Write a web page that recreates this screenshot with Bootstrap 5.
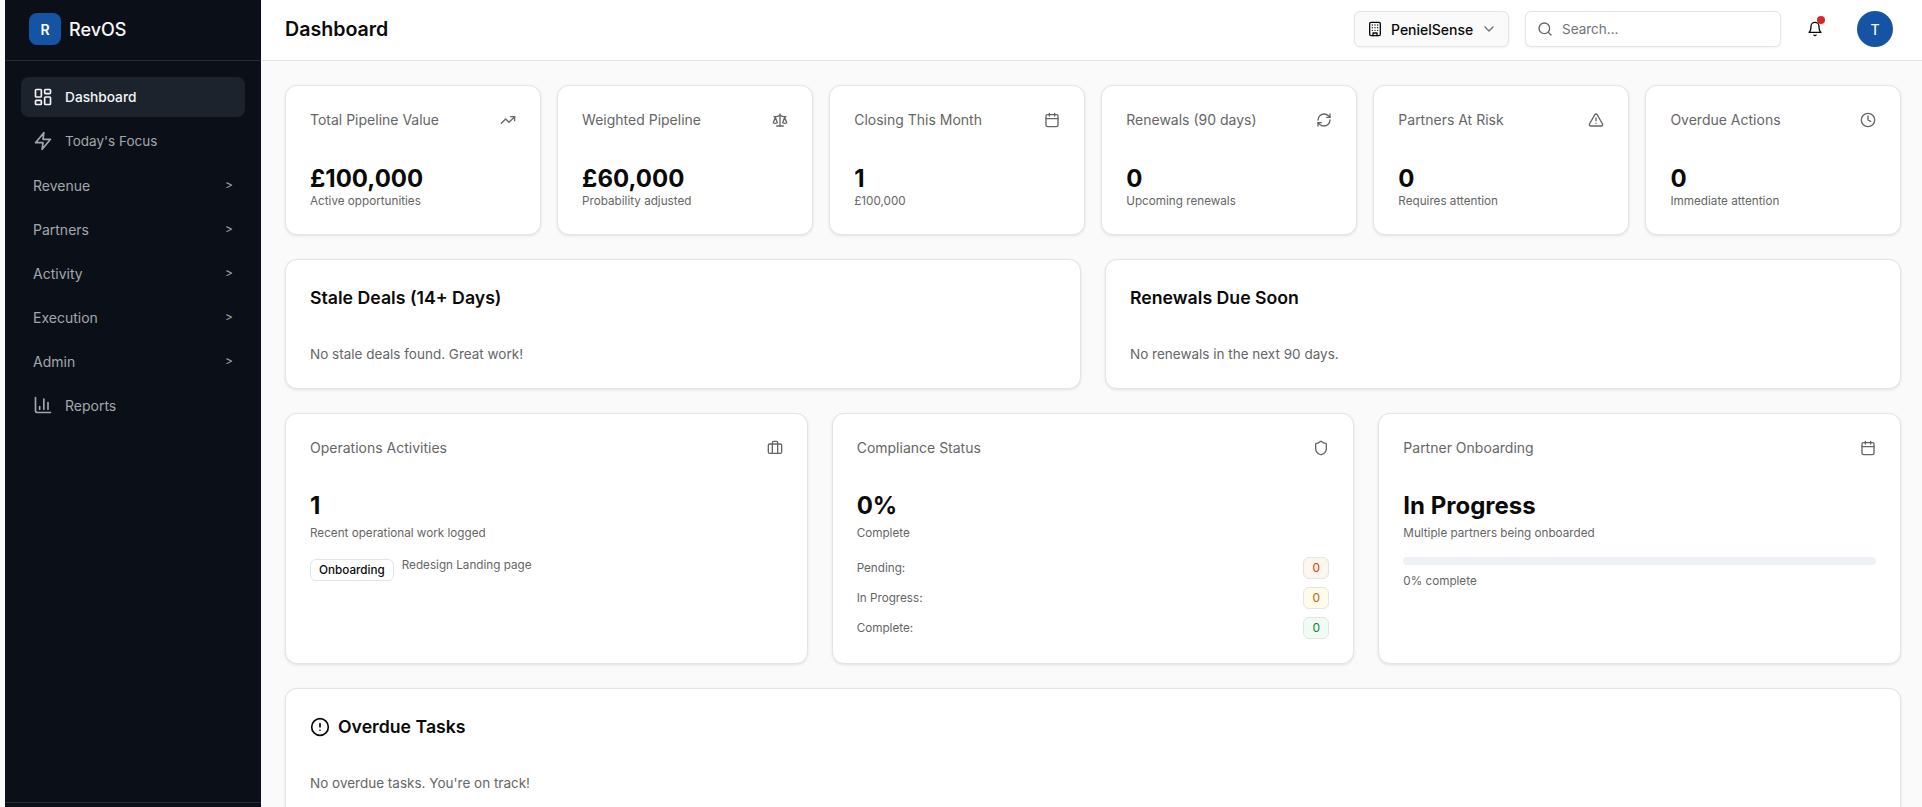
<!DOCTYPE html>
<html lang="en">
<head>
  <meta charset="UTF-8" />
  <meta name="viewport" content="width=device-width, initial-scale=1.0"/>
  <title>Dashboard - RevOS</title>
  <link href="https://cdn.jsdelivr.net/npm/bootstrap@5.3.0/dist/css/bootstrap.min.css" rel="stylesheet">
  <style>
    body {
      font-family: Inter, "Liberation Sans", sans-serif;
      background-color: #fafafa;
      color: #0a0a0a;
      height: 100vh;
      overflow: hidden;
    }
    .ico {
      width: 16px;
      height: 16px;
      fill: none;
      stroke: currentColor;
      stroke-width: 2;
      stroke-linecap: round;
      stroke-linejoin: round;
      flex-shrink: 0;
    }
    .ico-nav { width: 20px; height: 20px; }

    .side-bar {
      width: 256px;
      margin-left: 5px;
      background-color: #0b1018;
      flex-shrink: 0;
    }
    .side-brand {
      height: 61px;
      padding: 0 0 2px 24px;
      border-bottom: 1px solid #262b34;
      color: #f7f7f7;
      font-size: 18px;
      font-weight: 500;
    }
    .brand-box {
      width: 32px;
      height: 32px;
      border-radius: 8px;
      background-color: #1554a5;
      font-size: 14px;
      font-weight: 600;
    }
    .side-nav { padding: 16px 16px 0; gap: 4px; }
    .side-link {
      height: 40px;
      padding: 0 12px;
      border-radius: 8px;
      color: #a3a6ab;
      font-size: 14px;
      gap: 12px;
      text-decoration: none;
    }
    .side-link.active { background-color: #1d232d; color: #f4f4f5; font-weight: 500; font-size: 13.7px; }
    .side-tight { font-size: 13.5px; }
    .side-arrow { font-size: 12px; }
    .side-foot { height: 5px; border-top: 1px solid #262b34; }

    .top-bar {
      height: 61px;
      padding: 0 29px 2px 24px;
      background-color: #fff;
      border-bottom: 1px solid #e4e4e4;
      flex-shrink: 0;
    }
    .top-title { font-size: 19.6px; font-weight: 600; margin: 2px 0 0; }
    .org-btn {
      width: 155px;
      height: 36px;
      padding: 0 12px;
      gap: 8px;
      background-color: #fafafa;
      border: 1px solid #e4e4e4;
      border-radius: 6px;
      color: #0a0a0a;
      font-size: 14px;
      font-weight: 500;
      box-shadow: 0 1px 2px rgba(0,0,0,.05);
    }
    .search-box { width: 256px; height: 36px; color: #666; }
    .search-box .form-control {
      height: 36px;
      padding-left: 36px;
      font-size: 13.5px;
      border-color: #e4e4e4;
      box-shadow: 0 1px 2px rgba(0,0,0,.05);
    }
    .search-box .form-control::placeholder { color: #737373; }
    .search-box .ico { position: absolute; left: 12px; top: 10px; }
    .bell-btn { width: 36px; height: 36px; color: #0a0a0a; }
    .bell-dot {
      position: absolute;
      top: 5px;
      right: 8px;
      width: 8px;
      height: 8px;
      border-radius: 50%;
      background-color: #dc2626;
    }
    .user-dot {
      width: 36px;
      height: 36px;
      background-color: #1554a5;
      color: #f4f4f5;
      font-size: 14px;
      font-weight: 500;
    }

    .main-area { padding: 24px 21px 0 24px; gap: 24px; overflow: hidden; }
    .panel {
      background-color: #fff;
      border: 1px solid #e4e4e4;
      border-radius: 12px;
      box-shadow: 0 1px 3px rgba(0,0,0,.1);
      padding: 24px;
    }
    .stat-grid { display: grid; grid-template-columns: repeat(6, 1fr); gap: 16.5px; }
    .duo-grid { display: grid; grid-template-columns: repeat(2, 1fr); gap: 24px; }
    .trio-grid { display: grid; grid-template-columns: repeat(3, 1fr); gap: 24px; }
    .stat-panel { height: 150px; }
    .tall-panel { height: 251px; }
    .wide-panel { height: 130px; }
    .panel-label { font-size: 14px; color: #666; line-height: 20px; }
    .panel-head { color: #666; margin-bottom: 33px; }
    .tall-panel .panel-head { margin-bottom: 32px; }
    .panel-value { font-size: 24px; font-weight: 700; line-height: 31px; }
    .panel-sub { font-size: 11.7px; color: #666; line-height: 16px; }
    .stat-panel .panel-sub { margin-top: -1px; }
    .tall-panel .panel-sub { margin-top: 4px; }
    .tall-panel .tag-note { margin-top: -2px; }
    .panel-title { font-size: 17.7px; font-weight: 600; line-height: 28px; margin: 0 0 32px; }
    .panel-text { font-size: 13.5px; color: #666; line-height: 20px; margin: 0; }
    .tag-row { margin-top: 18px; gap: 8px; }
    .tag-chip {
      color: #0a0a0a;
      background: #fff;
      border: 1px solid #e4e4e4;
      border-radius: 6px;
      font-size: 11.7px;
      font-weight: 500;
      padding: 0 8px;
      line-height: 20px;
    }
    .status-list { margin-top: 16px; gap: 8px; }
    .status-chip {
      width: 26px;
      height: 22px;
      border: 1px solid #e4e4e4;
      border-radius: 6px;
      font-size: 12px;
      font-weight: 400;
    }
    .chip-red { background-color: #fdf6ef; color: #dc3a0a; }
    .chip-amber { background-color: #fefbea; color: #b86a06; }
    .chip-green { background-color: #effbf3; color: #15803d; }
    .bar-track { height: 8px; margin-top: 16px; background-color: #eef1f5; border-radius: 8px; }
    .tall-panel .bar-note { margin-top: 8px; }
    .overdue-title { gap: 8px; }
    .overdue-title .ico { width: 20px; height: 20px; }
  </style>
</head>
<body class="d-flex">

<svg width="0" height="0" class="position-absolute">
  <symbol id="i-dash" viewBox="0 0 24 24"><rect x="3" y="3" width="7" height="9" rx="1"/><rect x="14" y="3" width="7" height="5" rx="1"/><rect x="14" y="12" width="7" height="9" rx="1"/><rect x="3" y="16" width="7" height="5" rx="1"/></symbol>
  <symbol id="i-zap" viewBox="0 0 24 24"><polygon points="13 2 3 14 12 14 11 22 21 10 12 10 13 2"/></symbol>
  <symbol id="i-chart" viewBox="0 0 24 24"><path d="M3 3v16a2 2 0 0 0 2 2h16"/><path d="M18 17V9"/><path d="M13 17V5"/><path d="M8 17v-3"/></symbol>
  <symbol id="i-building" viewBox="0 0 24 24"><rect x="4" y="2" width="16" height="20" rx="2"/><path d="M9 22v-4h6v4"/><path d="M8 6h.01M16 6h.01M12 6h.01M12 10h.01M12 14h.01M16 10h.01M16 14h.01M8 10h.01M8 14h.01"/></symbol>
  <symbol id="i-chev" viewBox="0 0 24 24"><path d="m6 9 6 6 6-6"/></symbol>
  <symbol id="i-search" viewBox="0 0 24 24"><circle cx="11" cy="11" r="8"/><path d="m21 21-4.3-4.3"/></symbol>
  <symbol id="i-bell" viewBox="0 0 24 24"><path d="M6 8a6 6 0 0 1 12 0c0 7 3 9 3 9H3s3-2 3-9"/><path d="M10.3 21a1.94 1.94 0 0 0 3.4 0"/></symbol>
  <symbol id="i-trend" viewBox="0 0 24 24"><polyline points="22 7 13.5 15.5 8.5 10.5 2 17"/><polyline points="16 7 22 7 22 13"/></symbol>
  <symbol id="i-scale" viewBox="0 0 24 24"><path d="m16 16 3-8 3 8c-.87.65-1.92 1-3 1s-2.13-.35-3-1Z"/><path d="m2 16 3-8 3 8c-.87.65-1.92 1-3 1s-2.13-.35-3-1Z"/><path d="M7 21h10"/><path d="M12 3v18"/><path d="M3 7h2c2 0 5-1 7-2 2 1 5 2 7 2h2"/></symbol>
  <symbol id="i-cal" viewBox="0 0 24 24"><rect x="3" y="4" width="18" height="18" rx="2"/><path d="M16 2v4M8 2v4M3 10h18"/></symbol>
  <symbol id="i-refresh" viewBox="0 0 24 24"><path d="M3 12a9 9 0 0 1 9-9 9.75 9.75 0 0 1 6.74 2.74L21 8"/><path d="M21 3v5h-5"/><path d="M21 12a9 9 0 0 1-9 9 9.75 9.75 0 0 1-6.74-2.74L3 16"/><path d="M8 16H3v5"/></symbol>
  <symbol id="i-warn" viewBox="0 0 24 24"><path d="m21.73 18-8-14a2 2 0 0 0-3.48 0l-8 14A2 2 0 0 0 4 21h16a2 2 0 0 0 1.73-3"/><path d="M12 9v4"/><path d="M12 17h.01"/></symbol>
  <symbol id="i-clock" viewBox="0 0 24 24"><circle cx="12" cy="12" r="10"/><polyline points="12 6 12 12 16 14"/></symbol>
  <symbol id="i-case" viewBox="0 0 24 24"><rect x="2" y="6" width="20" height="14" rx="2"/><path d="M16 20V4a2 2 0 0 0-2-2h-4a2 2 0 0 0-2 2v16"/></symbol>
  <symbol id="i-shield" viewBox="0 0 24 24"><path d="M20 13c0 5-3.5 7.5-7.66 8.95a1 1 0 0 1-.67-.01C7.5 20.5 4 18 4 13V6a1 1 0 0 1 1-1c2 0 4.5-1.2 6.24-2.72a1.17 1.17 0 0 1 1.52 0C14.51 3.81 17 5 19 5a1 1 0 0 1 1 1z"/></symbol>
  <symbol id="i-alert" viewBox="0 0 24 24"><circle cx="12" cy="12" r="10"/><path d="M12 8v4"/><path d="M12 16h.01"/></symbol>
</svg>

<!-- Sidebar -->
<aside class="side-bar d-flex flex-column">
  <div class="side-brand d-flex align-items-center gap-2">
    <span class="brand-box d-flex align-items-center justify-content-center text-white">R</span>
    RevOS
  </div>
  <nav class="side-nav d-flex flex-column">
    <a class="side-link active d-flex align-items-center" href="#"><svg class="ico ico-nav"><use href="#i-dash"/></svg>Dashboard</a>
    <a class="side-link side-tight d-flex align-items-center" href="#"><svg class="ico ico-nav"><use href="#i-zap"/></svg>Today's Focus</a>
    <a class="side-link d-flex align-items-center justify-content-between" href="#">Revenue<span class="side-arrow">&gt;</span></a>
    <a class="side-link d-flex align-items-center justify-content-between" href="#">Partners<span class="side-arrow">&gt;</span></a>
    <a class="side-link d-flex align-items-center justify-content-between" href="#">Activity<span class="side-arrow">&gt;</span></a>
    <a class="side-link d-flex align-items-center justify-content-between" href="#">Execution<span class="side-arrow">&gt;</span></a>
    <a class="side-link d-flex align-items-center justify-content-between" href="#">Admin<span class="side-arrow">&gt;</span></a>
    <a class="side-link d-flex align-items-center" href="#"><svg class="ico ico-nav"><use href="#i-chart"/></svg>Reports</a>
  </nav>
  <div class="side-foot mt-auto"></div>
</aside>

<div class="flex-grow-1 d-flex flex-column min-w-0">
  <!-- Top bar -->
  <header class="top-bar d-flex align-items-center justify-content-between">
    <h1 class="top-title">Dashboard</h1>
    <div class="d-flex align-items-center gap-3">
      <button class="org-btn d-flex align-items-center" type="button">
        <svg class="ico"><use href="#i-building"/></svg>
        <span>PenielSense</span>
        <svg class="ico ms-auto text-secondary"><use href="#i-chev"/></svg>
      </button>
      <form class="search-box position-relative" role="search">
        <svg class="ico"><use href="#i-search"/></svg>
        <input class="form-control" type="search" placeholder="Search...">
      </form>
      <button class="bell-btn btn p-0 border-0 position-relative d-flex align-items-center justify-content-center" type="button">
        <svg class="ico"><use href="#i-bell"/></svg>
        <span class="bell-dot"></span>
      </button>
      <div class="user-dot rounded-circle d-flex align-items-center justify-content-center ms-2">T</div>
    </div>
  </header>

  <!-- Content -->
  <main class="main-area d-flex flex-column">
    <section class="stat-grid">
      <div class="panel stat-panel">
        <div class="panel-head d-flex justify-content-between align-items-center"><span class="panel-label">Total Pipeline Value</span><svg class="ico"><use href="#i-trend"/></svg></div>
        <div class="panel-value">£100,000</div>
        <div class="panel-sub">Active opportunities</div>
      </div>
      <div class="panel stat-panel">
        <div class="panel-head d-flex justify-content-between align-items-center"><span class="panel-label">Weighted Pipeline</span><svg class="ico"><use href="#i-scale"/></svg></div>
        <div class="panel-value">£60,000</div>
        <div class="panel-sub">Probability adjusted</div>
      </div>
      <div class="panel stat-panel">
        <div class="panel-head d-flex justify-content-between align-items-center"><span class="panel-label">Closing This Month</span><svg class="ico"><use href="#i-cal"/></svg></div>
        <div class="panel-value">1</div>
        <div class="panel-sub">£100,000</div>
      </div>
      <div class="panel stat-panel">
        <div class="panel-head d-flex justify-content-between align-items-center"><span class="panel-label">Renewals (90 days)</span><svg class="ico"><use href="#i-refresh"/></svg></div>
        <div class="panel-value">0</div>
        <div class="panel-sub">Upcoming renewals</div>
      </div>
      <div class="panel stat-panel">
        <div class="panel-head d-flex justify-content-between align-items-center"><span class="panel-label">Partners At Risk</span><svg class="ico"><use href="#i-warn"/></svg></div>
        <div class="panel-value">0</div>
        <div class="panel-sub">Requires attention</div>
      </div>
      <div class="panel stat-panel">
        <div class="panel-head d-flex justify-content-between align-items-center"><span class="panel-label">Overdue Actions</span><svg class="ico"><use href="#i-clock"/></svg></div>
        <div class="panel-value">0</div>
        <div class="panel-sub">Immediate attention</div>
      </div>
    </section>

    <section class="duo-grid">
      <div class="panel wide-panel">
        <h2 class="panel-title">Stale Deals (14+ Days)</h2>
        <p class="panel-text">No stale deals found. Great work!</p>
      </div>
      <div class="panel wide-panel">
        <h2 class="panel-title">Renewals Due Soon</h2>
        <p class="panel-text">No renewals in the next 90 days.</p>
      </div>
    </section>

    <section class="trio-grid">
      <div class="panel tall-panel">
        <div class="panel-head d-flex justify-content-between align-items-center"><span class="panel-label">Operations Activities</span><svg class="ico"><use href="#i-case"/></svg></div>
        <div class="panel-value">1</div>
        <div class="panel-sub">Recent operational work logged</div>
        <div class="tag-row d-flex align-items-start">
          <span class="tag-chip">Onboarding</span>
          <span class="panel-sub tag-note">Redesign Landing page</span>
        </div>
      </div>
      <div class="panel tall-panel">
        <div class="panel-head d-flex justify-content-between align-items-center"><span class="panel-label">Compliance Status</span><svg class="ico"><use href="#i-shield"/></svg></div>
        <div class="panel-value">0%</div>
        <div class="panel-sub">Complete</div>
        <div class="status-list d-flex flex-column">
          <div class="d-flex justify-content-between align-items-center"><span class="panel-sub mt-0">Pending:</span><span class="status-chip chip-red d-flex align-items-center justify-content-center">0</span></div>
          <div class="d-flex justify-content-between align-items-center"><span class="panel-sub mt-0">In Progress:</span><span class="status-chip chip-amber d-flex align-items-center justify-content-center">0</span></div>
          <div class="d-flex justify-content-between align-items-center"><span class="panel-sub mt-0">Complete:</span><span class="status-chip chip-green d-flex align-items-center justify-content-center">0</span></div>
        </div>
      </div>
      <div class="panel tall-panel">
        <div class="panel-head d-flex justify-content-between align-items-center"><span class="panel-label">Partner Onboarding</span><svg class="ico"><use href="#i-cal"/></svg></div>
        <div class="panel-value">In Progress</div>
        <div class="panel-sub">Multiple partners being onboarded</div>
        <div class="bar-track"></div>
        <div class="panel-sub bar-note">0% complete</div>
      </div>
    </section>

    <section class="panel flex-shrink-0">
      <h2 class="panel-title overdue-title d-flex align-items-center"><svg class="ico"><use href="#i-alert"/></svg>Overdue Tasks</h2>
      <p class="panel-text">No overdue tasks. You're on track!</p>
    </section>
  </main>
</div>

<script src="https://cdn.jsdelivr.net/npm/bootstrap@5.3.0/dist/js/bootstrap.bundle.min.js"></script>
</body>
</html>
